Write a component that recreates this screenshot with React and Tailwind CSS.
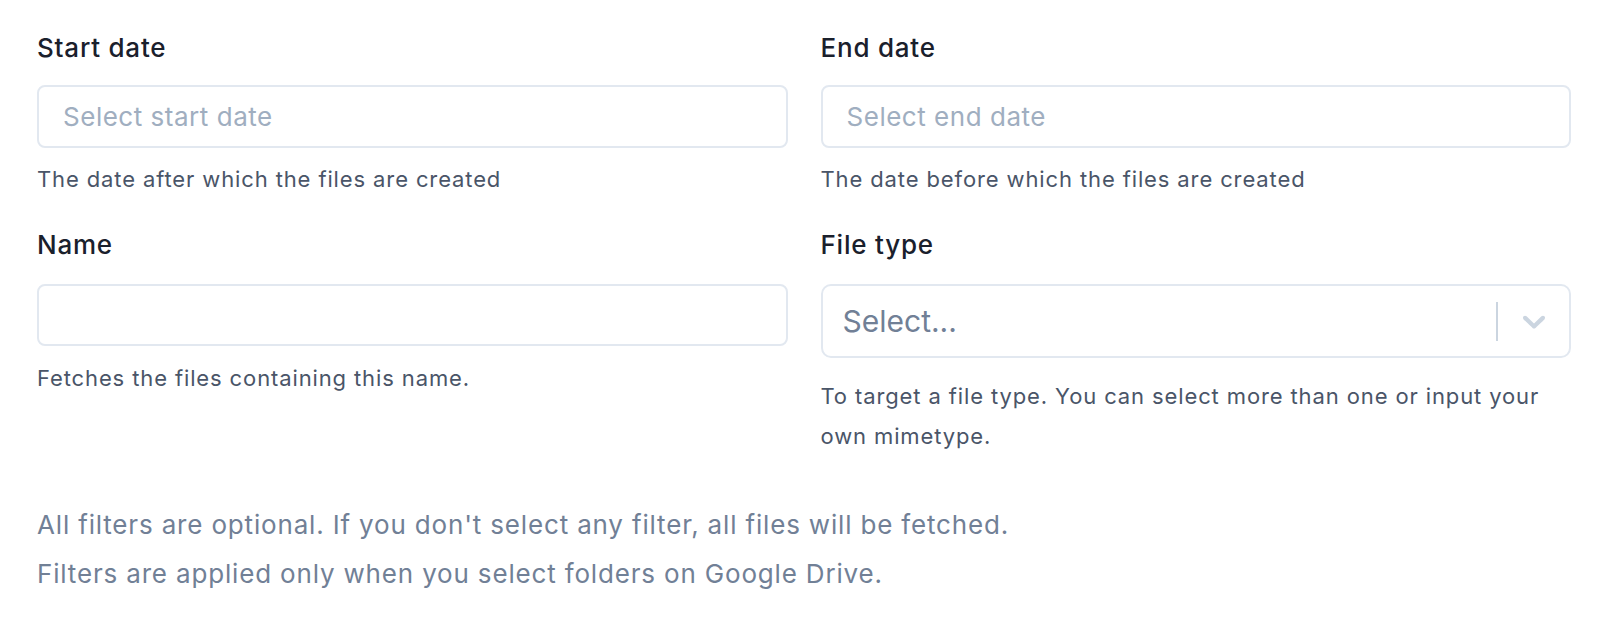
import React from 'react';

const Label = ({ children, className = '' }) => (
  <label className={`block text-[26px] leading-[36px] tracking-[0.03em] font-medium text-[#1a202c] ${className}`}>{children}</label>
);

const Help = ({ children, className = '' }) => (
  <p className={`text-[22px] leading-[40px] tracking-[0.04em] text-[#4a5568] ${className}`}>{children}</p>
);

const TextInput = ({ placeholder, className = '' }) => (
  <input
    type="text"
    placeholder={placeholder}
    className={`block w-full border-2 border-[#e2e8f0] rounded-[8px] bg-white pl-[24px] text-[26px] tracking-[0.02em] text-[#1a202c] placeholder:text-[#a0aec0] outline-none ${className}`}
  />
);

const Chevron = () => (
  <svg viewBox="0 0 20 20" width="38" height="38" fill="#cbd5e0" aria-hidden="true">
    <path d="M4.516 7.548c0.436-0.446 1.043-0.481 1.576 0l3.908 3.747 3.908-3.747c0.533-0.481 1.141-0.446 1.574 0 0.436 0.445 0.408 1.197 0 1.615-0.406 0.418-4.695 4.502-4.695 4.502-0.217 0.223-0.502 0.335-0.787 0.335s-0.57-0.112-0.789-0.335c0 0-4.287-4.084-4.695-4.502s-0.436-1.17 0-1.615z" />
  </svg>
);

export default function App() {
  return (
    <div className="bg-white min-h-screen px-[37px] pt-[30px] font-['Inter','Noto_Sans',sans-serif] antialiased">
      <div className="grid grid-cols-2 gap-x-[33px] items-start">
        {/* row 1 */}
        <div>
          <Label className="mb-[19px]">Start date</Label>
          <TextInput placeholder="Select start date" className="h-[63px]" />
          <Help className="mt-[11px]">The date after which the files are created</Help>
        </div>
        <div>
          <Label className="mb-[19px]">End date</Label>
          <TextInput placeholder="Select end date" className="h-[63px]" />
          <Help className="mt-[11px]">The date before which the files are created</Help>
        </div>

        {/* row 2 */}
        <div className="mt-[28px]">
          <Label className="mb-[21px]">Name</Label>
          <TextInput className="h-[62px]" />
          <Help className="mt-[12px]">Fetches the files containing this name.</Help>
        </div>
        <div className="mt-[28px]">
          <Label className="mb-[21px]">File type</Label>
          <div className="flex items-center h-[74px] border-2 border-[#e2e8f0] rounded-[10px] bg-white pl-[20px] pr-[16px]">
            <span className="flex-1 text-[30px] text-[#718096]">Select...</span>
            <span className="w-[2px] h-[39px] bg-[#cbd5e0]" />
            <span className="ml-[17px] flex"><Chevron /></span>
          </div>
          <Help className="mt-[18px]">
            To target a file type. You can select more than one or input your own mimetype.
          </Help>
        </div>
      </div>

      <div className="mt-[44px] text-[26px] leading-[49px] tracking-[0.032em] text-[#718096]">
        <p>All filters are optional. If you don't select any filter, all files will be fetched.</p>
        <p>Filters are applied only when you select folders on Google Drive.</p>
      </div>
    </div>
  );
}
